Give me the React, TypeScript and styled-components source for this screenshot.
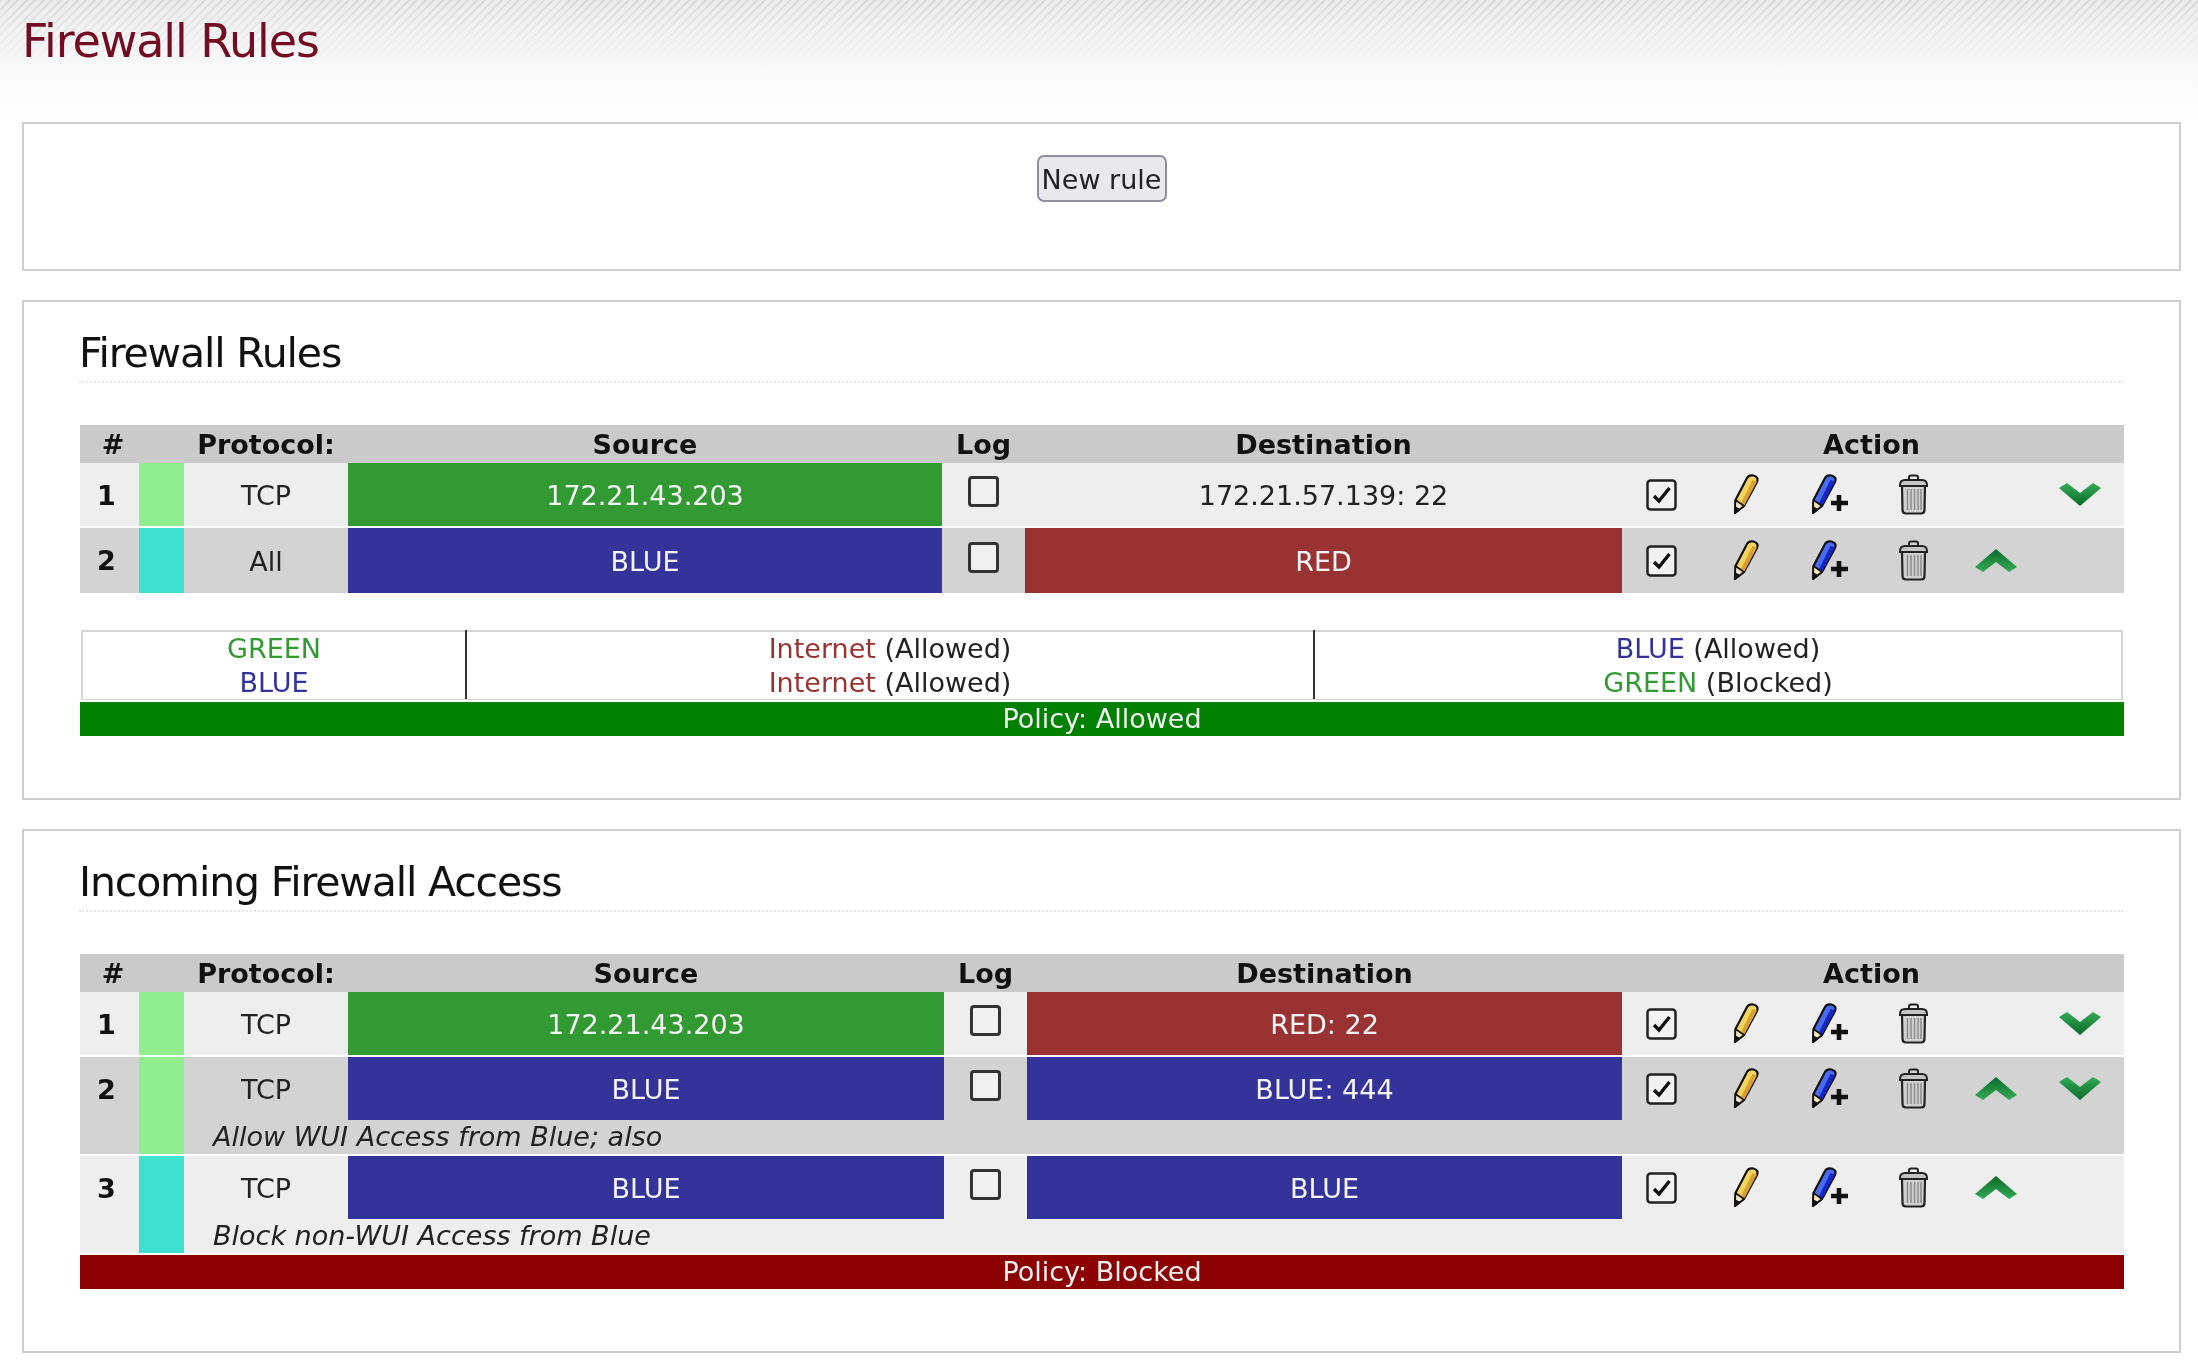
import React from "react";
import styled, { createGlobalStyle } from "styled-components";

const GlobalStyle = createGlobalStyle`
  html, body {
    margin: 0;
    padding: 0;
    background: #fff;
  }
  body {
    font-family: "DejaVu Sans", sans-serif;
    font-size: 27px;
    color: #222;
  }
`;

const Page = styled.div`
  width: 2198px;
  height: 1372px;
  overflow: hidden;
  filter: blur(0.6px);
`;

const Banner = styled.header`
  height: 122px;
  padding-left: 22px;
  background:
    linear-gradient(to bottom, rgba(248, 248, 248, 0) 0, #f8f8f8 62px, #fff 122px),
    repeating-linear-gradient(135deg, #dadada 0 2px, #ececec 2px 6px);
  background-color: #f0f0f0;
`;

const PageTitle = styled.h1`
  margin: 0;
  font-size: 46px;
  font-weight: normal;
  letter-spacing: -1.1px;
  line-height: 82px;
  color: #720d24;
`;

const Panel = styled.section`
  margin: 0 17px 29px 22px;
  border: 2px solid #cfcfcf;
  background: #fff;
  padding: 0 56px 62px;
`;

const ButtonPanel = styled(Panel)`
  height: 114px;
  padding: 31px 0 0;
  display: flex;
  justify-content: center;
  align-items: flex-start;
`;

const NewRule = styled.button`
  width: 130px;
  height: 47px;
  padding: 2px 0 0;
  border: 2px solid #8f8f9d;
  border-radius: 7px;
  background: #e9e9ed;
  color: #222;
  font-family: "DejaVu Sans", sans-serif;
  font-size: 27px;
`;

const Heading = styled.h2`
  margin: 29px 0 42px -1px;
  height: 50px;
  border-bottom: 2px dotted #e6e6e6;
  font-size: 41px;
  font-weight: normal;
  letter-spacing: -1.15px;
  line-height: 44px;
  color: #111;
`;

const RuleTable = styled.table`
  width: 2044px;
  table-layout: fixed;
  border-collapse: collapse;
  border-spacing: 0;
`;

const Col = styled.col<{ $w: number }>`
  width: ${(p) => p.$w}px;
`;

const Th = styled.th`
  height: 38px;
  padding: 1px 0 0;
  box-sizing: border-box;
  background: #cacaca;
  color: #111;
  font-size: 27px;
  font-weight: bold;
  line-height: 37px;
  text-align: center;
`;

const HashTh = styled(Th)`
  padding-left: 7px;
`;

const ActionTh = styled(Th)`
  padding-right: 3px;
`;

const Td = styled.td<{ $shade: boolean; $edge?: boolean; $flush?: boolean }>`
  height: ${(p) => (p.$flush ? 65 : 63)}px;
  box-sizing: content-box;
  padding: 0;
  background: ${(p) => (p.$shade ? "#d3d3d3" : "#eeeeee")};
  border-bottom: ${(p) => (p.$edge ? "2px solid #fff" : "0")};
  text-align: center;
  vertical-align: middle;
`;

const TextCell = styled(Td)`
  height: ${(p) => (p.$flush ? 62 : 60)}px;
  padding-top: 3px;
  line-height: 30px;
`;

const NumCell = styled(Td)`
  height: 60px;
  padding: 3px 6px 0 0;
  vertical-align: top;
  font-weight: bold;
  line-height: 60px;
  color: #111;
`;

const Swatch = styled(Td)<{ $zone: string }>`
  background: ${(p) => p.$zone};
`;

const ZoneCell = styled(TextCell)<{ $fill: string }>`
  background: ${(p) => p.$fill};
  color: #f4f4f4;
`;

const LogBox = styled.span`
  display: block;
  width: 31px;
  height: 31px;
  margin: 0 auto 7px;
  box-sizing: border-box;
  border: 3px solid #333;
  border-radius: 4px;
  background: #f0f0f0;
`;

const IconCell = styled(Td)`
  padding-right: 5px;
  line-height: 0;
`;

const Comment = styled(Td)`
  height: 34px;
  padding-left: 29px;
  font-style: italic;
  line-height: 34px;
  text-align: left;
`;

const Legend = styled.div`
  display: grid;
  grid-template-columns: 384px 848px 1fr;
  margin: 37px 0 2px 1px;
  height: 70px;
  box-sizing: border-box;
  border: 2px solid #d6d6d6;
  border-bottom-width: 1px;
  line-height: 33.5px;
  text-align: center;
`;

const LegendCol = styled.div<{ $rule?: boolean }>`
  border-right: ${(p) => (p.$rule ? "2px solid #333" : "0")};
  margin-top: -2px;
  padding-top: 2px;
`;

const Zone = styled.span<{ $c: string }>`
  color: ${(p) => p.$c};
`;

const Policy = styled.div<{ $bg: string }>`
  width: 2044px;
  height: 34px;
  background: ${(p) => p.$bg};
  color: #f0f0f0;
  line-height: 34px;
  text-align: center;
`;

const GREEN = "#339933";
const BLUE = "#333399";
const RED = "#993333";
const LIGHT_GREEN = "#90ee90";
const TURQUOISE = "#40e0d0";

function CheckIcon() {
  return (
    <svg width="31" height="32" viewBox="0 0 31 32">
      <rect x="1.5" y="1.5" width="28" height="29" rx="3" fill="#f2f2f2" stroke="#222" strokeWidth="2.5" />
      <path d="M8 17l5 5L23.5 9" fill="none" stroke="#111" strokeWidth="3.4" />
    </svg>
  );
}

function PencilBody({ fill, dark }: { fill: string; dark: string }) {
  return (
    <>
      <path d="M2 39L2.5 26L14 4Q16 0.5 20.5 1.5Q26 3 24 8L11 32Z" fill={fill} stroke="#111" strokeWidth="2.2" strokeLinejoin="round" />
      <path d="M7.5 30L19.5 6L24 7.5L11 32Z" fill={dark} />
      <path d="M2 39L2.5 26L11 32Z" fill="#f5e6c0" stroke="#111" strokeWidth="1.6" strokeLinejoin="round" />
      <path d="M1 40L1.8 32L8 35.5Z" fill="#111" />
    </>
  );
}

function PencilIcon() {
  return (
    <svg width="26" height="41" viewBox="0 0 26 41">
      <PencilBody fill="#f6d462" dark="#d9a22c" />
    </svg>
  );
}

function AddPencilIcon() {
  return (
    <svg width="38" height="41" viewBox="0 0 38 41">
      <PencilBody fill="#4a6cf2" dark="#1526c4" />
      <path d="M28 21v16M20 29h17" stroke="#111" strokeWidth="4.6" fill="none" />
    </svg>
  );
}

function TrashIcon() {
  return (
    <svg width="31" height="41" viewBox="0 0 31 41">
      <path d="M11 6V3.5Q11 1.5 13 1.5H18Q20 1.5 20 3.5V6" fill="none" stroke="#222" strokeWidth="2" />
      <path d="M2 11Q2 6 7 6H24Q29 6 29 11V12H2Z" fill="#c4c4c4" stroke="#222" strokeWidth="2" />
      <path d="M4 12H27L26.5 36Q26.5 39.5 23 39.5H8Q4.5 39.5 4.5 36Z" fill="#d0d0d0" stroke="#222" strokeWidth="2.2" />
      <path d="M9.5 15V36M13 15V36M16.5 15V36M20 15V36M23 15V36" stroke="#8c8c8c" strokeWidth="1.5" />
    </svg>
  );
}

function Chevron({ up, id }: { up?: boolean; id: string }) {
  return (
    <svg width="42" height="23" viewBox="0 0 42 23">
      <defs>
        <linearGradient id={id} x1="0" y1={up ? "1" : "0"} x2="0" y2={up ? "0" : "1"}>
          <stop offset="0" stopColor="#34ab58" />
          <stop offset="1" stopColor="#0b6a28" />
        </linearGradient>
      </defs>
      <path
        d={up ? "M0 18L21 0L42 18L34 23L21 13L8 23Z" : "M0 5L21 23L42 5L34 0L21 10L8 0Z"}
        fill={`url(#${id})`}
      />
    </svg>
  );
}

type Rule = {
  num: number;
  zone: string;
  proto: string;
  src: string;
  srcFill: string;
  dst: string;
  dstFill?: string;
  up?: boolean;
  down?: boolean;
  comment?: string;
  flush?: boolean;
};

const widths1 = [59, 45, 164, 594, 83, 597, 84, 85, 83, 83, 83, 84];
const widths2 = [59, 45, 164, 596, 83, 595, 84, 85, 83, 83, 83, 84];

const outgoing: Rule[] = [
  { num: 1, zone: LIGHT_GREEN, proto: "TCP", src: "172.21.43.203", srcFill: GREEN, dst: "172.21.57.139: 22", down: true },
  { num: 2, zone: TURQUOISE, proto: "All", src: "BLUE", srcFill: BLUE, dst: "RED", dstFill: RED, up: true, flush: true },
];

const incoming: Rule[] = [
  { num: 1, zone: LIGHT_GREEN, proto: "TCP", src: "172.21.43.203", srcFill: GREEN, dst: "RED: 22", dstFill: RED, down: true },
  { num: 2, zone: LIGHT_GREEN, proto: "TCP", src: "BLUE", srcFill: BLUE, dst: "BLUE: 444", dstFill: BLUE, up: true, down: true, comment: "Allow WUI Access from Blue; also" },
  { num: 3, zone: TURQUOISE, proto: "TCP", src: "BLUE", srcFill: BLUE, dst: "BLUE", dstFill: BLUE, up: true, comment: "Block non-WUI Access from Blue" },
];

function Rules({ name, rows, widths }: { name: string; rows: Rule[]; widths: number[] }) {
  return (
    <RuleTable>
      <colgroup>
        {widths.map((w, i) => (
          <Col key={i} $w={w} />
        ))}
      </colgroup>
      <thead>
        <tr>
          <HashTh>#</HashTh>
          <Th />
          <Th>Protocol:</Th>
          <Th>Source</Th>
          <Th>Log</Th>
          <Th>Destination</Th>
          <ActionTh colSpan={6}>Action</ActionTh>
        </tr>
      </thead>
      <tbody>
        {rows.map((r) => {
          const shade = r.num % 2 === 0;
          const edge = !r.comment && !r.flush;
          const span = r.comment ? 2 : 1;
          const key = `${name}-${r.num}`;
          const cell = { $shade: shade, $edge: edge, $flush: r.flush };
          return (
            <React.Fragment key={key}>
              <tr>
                <NumCell {...cell} $edge={!r.flush} rowSpan={span}>{r.num}</NumCell>
                <Swatch {...cell} $edge={!r.flush} $zone={r.zone} rowSpan={span} />
                <TextCell {...cell}>{r.proto}</TextCell>
                <ZoneCell {...cell} $fill={r.srcFill}>{r.src}</ZoneCell>
                <Td {...cell}><LogBox /></Td>
                {r.dstFill ? (
                  <ZoneCell {...cell} $fill={r.dstFill}>{r.dst}</ZoneCell>
                ) : (
                  <TextCell {...cell}>{r.dst}</TextCell>
                )}
                <IconCell {...cell}><CheckIcon /></IconCell>
                <IconCell {...cell}><PencilIcon /></IconCell>
                <IconCell {...cell}><AddPencilIcon /></IconCell>
                <IconCell {...cell}><TrashIcon /></IconCell>
                <IconCell {...cell}>{r.up && <Chevron up id={`${key}-u`} />}</IconCell>
                <IconCell {...cell}>{r.down && <Chevron id={`${key}-d`} />}</IconCell>
              </tr>
              {r.comment && (
                <tr>
                  <Comment $shade={shade} $edge colSpan={10}>{r.comment}</Comment>
                </tr>
              )}
            </React.Fragment>
          );
        })}
      </tbody>
    </RuleTable>
  );
}

export default function App() {
  return (
    <Page>
      <GlobalStyle />
      <Banner>
        <PageTitle>Firewall Rules</PageTitle>
      </Banner>

      <ButtonPanel>
        <NewRule>New rule</NewRule>
      </ButtonPanel>

      <Panel>
        <Heading>Firewall Rules</Heading>
        <Rules name="out" rows={outgoing} widths={widths1} />
        <Legend>
          <LegendCol $rule>
            <Zone $c={GREEN}>GREEN</Zone>
            <br />
            <Zone $c={BLUE}>BLUE</Zone>
          </LegendCol>
          <LegendCol $rule>
            <Zone $c={RED}>Internet</Zone> (Allowed)
            <br />
            <Zone $c={RED}>Internet</Zone> (Allowed)
          </LegendCol>
          <LegendCol>
            <Zone $c={BLUE}>BLUE</Zone> (Allowed)
            <br />
            <Zone $c={GREEN}>GREEN</Zone> (Blocked)
          </LegendCol>
        </Legend>
        <Policy $bg="#008000">Policy: Allowed</Policy>
      </Panel>

      <Panel>
        <Heading>Incoming Firewall Access</Heading>
        <Rules name="in" rows={incoming} widths={widths2} />
        <Policy $bg="#8b0000">Policy: Blocked</Policy>
      </Panel>
    </Page>
  );
}
